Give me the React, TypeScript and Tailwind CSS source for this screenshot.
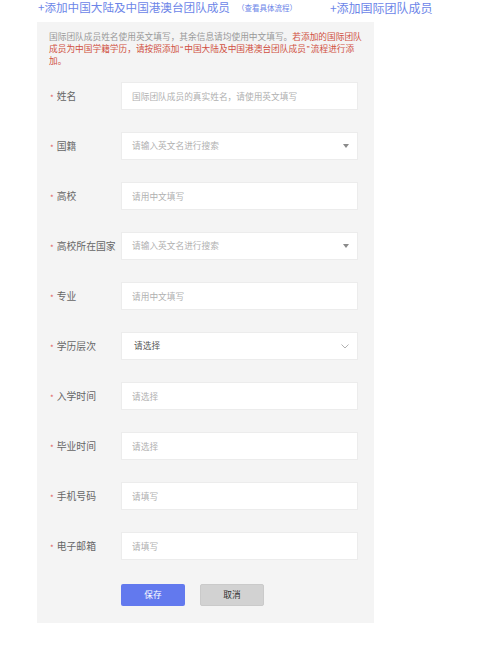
import React from "react";

type Field = {
    label: string;
    placeholder: string;
    kind: "input" | "search" | "select";
};

const fields: Field[] = [
    { label: "姓名", placeholder: "国际团队成员的真实姓名，请使用英文填写", kind: "input" },
    { label: "国籍", placeholder: "请输入英文名进行搜索", kind: "search" },
    { label: "高校", placeholder: "请用中文填写", kind: "input" },
    { label: "高校所在国家", placeholder: "请输入英文名进行搜索", kind: "search" },
    { label: "专业", placeholder: "请用中文填写", kind: "input" },
    { label: "学历层次", placeholder: "请选择", kind: "select" },
    { label: "入学时间", placeholder: "请选择", kind: "input" },
    { label: "毕业时间", placeholder: "请选择", kind: "input" },
    { label: "手机号码", placeholder: "请填写", kind: "input" },
    { label: "电子邮箱", placeholder: "请填写", kind: "input" },
];

const font = { fontFamily: '"Noto Sans CJK SC", "Noto Sans", sans-serif' };

function FieldControl({ field }: { field: Field }) {
    if (field.kind === "input") {
        return (
            <input
                placeholder={field.placeholder}
                className="w-[237px] h-[28px] bg-white border border-[#ececec] px-[10px] text-[8.7px] text-[#333] outline-none placeholder:text-[#b0b0b0]"
            />
        );
    }
    return (
        <div className="w-[237px] h-[28px] bg-white border border-[#ececec] pl-[10px] pr-[7px] flex items-center justify-between">
            <span className={field.kind === "select" ? "text-[8.7px] text-[#555] pl-[2px]" : "text-[8.7px] text-[#b0b0b0]"}>
                {field.placeholder}
            </span>
            {field.kind === "search" ? (
                <svg width="6" height="4" viewBox="0 0 6 4" className="mr-[1px]">
                    <path d="M0 0 L6 0 L3 4 Z" fill="#8a8a8a" />
                </svg>
            ) : (
                <svg width="8" height="5" viewBox="0 0 8 5" className="mr-[1px]">
                    <path d="M0.5 0.5 L4 4 L7.5 0.5" fill="none" stroke="#a8a8a8" strokeWidth="0.9" />
                </svg>
            )}
        </div>
    );
}

// curly quotes render narrow in the reference
const Q = ({ c }: { c: string }) => (
    <span className="mx-[1px]" style={{ fontFamily: '"Liberation Sans", sans-serif' }}>{c}</span>
);

export default function App() {
    return (
        <div className="min-h-[646px] bg-white" style={font}>
            <div className="ml-[37px] w-[337px]">
                {/* add-member links */}
                <div className="h-[22px] flex items-start pl-[1px] text-[#6c85e8]">
                    <span className="text-[11.6px] leading-[15px] whitespace-nowrap">+添加中国大陆及中国港澳台团队成员</span>
                    <span className="text-[7.5px] leading-[15px] ml-[7px] whitespace-nowrap">（查看具体流程）</span>
                    <span className="text-[12px] leading-[15px] ml-[33px] whitespace-nowrap">+添加国际团队成员</span>
                </div>

                <div className="bg-[#f4f4f4] pt-[9px] pb-[17px] pl-[12px] pr-[16px]">
                    <p className="text-[8.7px] leading-[12px] text-[#999] whitespace-nowrap -mr-[10px]">
                        国际团队成员姓名使用英文填写，其余信息请均使用中文填写。
                        <span className="text-[#d0503f]">
                            若添加的国际团队
                            <br />
                            成员为中国学籍学历，请按照添加<Q c="“" />中国大陆及中国港澳台团队成员<Q c="”" />流程进行添
                            <br />
                            加。
                        </span>
                    </p>

                    <div className="mt-[15px] flex flex-col gap-[22px]">
                        {fields.map((f) => (
                            <div key={f.label} className="flex items-center">
                                <div className="w-[72px] flex items-center text-[9.8px] text-[#666] whitespace-nowrap">
                                    <span className="text-[#e06060] text-[8px] mr-[3px] ml-[1px] translate-y-[2px]">*</span>
                                    {f.label}
                                </div>
                                <FieldControl field={f} />
                            </div>
                        ))}
                    </div>

                    <div className="mt-[24px] ml-[72px] flex gap-[15px]">
                        <button className="w-[64px] h-[22px] rounded-[2px] bg-[#6279ee] text-white text-[8.7px]">保存</button>
                        <button className="w-[64px] h-[22px] rounded-[2px] bg-[#d2d2d2] border border-[#cacaca] text-[#333] text-[8.7px]">取消</button>
                    </div>
                </div>
            </div>
        </div>
    );
}
